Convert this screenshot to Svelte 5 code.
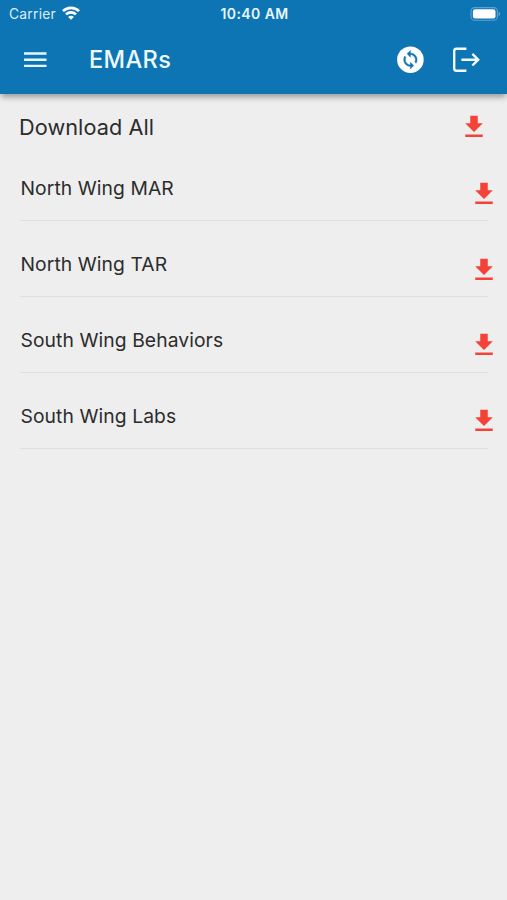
<script>
  const rows = ['North Wing MAR', 'North Wing TAR', 'South Wing Behaviors', 'South Wing Labs'];
</script>

{#snippet download()}
  <svg class="download" viewBox="0 0 24 24" aria-hidden="true">
    <path d="M5 20h14v-2H5v2zM19 9h-4V3H9v6H5l7 7 7-7z" />
  </svg>
{/snippet}

<div class="screen">
  <header>
    <div class="status">
      <div class="carrier">
        <span>Carrier</span>
        <svg width="18" height="14" viewBox="0 0 18 14" fill="none" stroke="#fff" stroke-width="2.6">
          <path d="M1 5.2C5.4.8 12.6.8 17 5.2" />
          <path d="M4 8.4c2.8-2.7 7.2-2.7 10 0" />
          <path d="M9 13.8 6.1 10.9c1.6-1.5 4.2-1.5 5.8 0z" fill="#fff" stroke="none" />
        </svg>
      </div>
      <span class="time">10:40 AM</span>
      <svg class="battery" width="31" height="14" viewBox="0 0 31 14">
        <rect x="1" y=".6" width="26.4" height="12.6" rx="3.8" fill="none" stroke="#5ea3d0" stroke-width="1.1" />
        <rect x="2.9" y="2.2" width="22.6" height="9.4" rx="2.3" fill="#fff" />
        <path d="M28.6 4.7c2 .7 2 3.7 0 4.4z" fill="#5ea3d0" />
      </svg>
    </div>
    <div class="toolbar">
      <svg class="menu" width="23" height="17" viewBox="0 0 23 17" fill="#e6f7ff">
        <path d="M0 .3h22.5v2.4H0zM0 6.5h22.5v2.4H0zM0 12.7h22.5v2.4H0z" />
      </svg>
      <h1>EMARs</h1>
      <svg class="sync" width="28" height="28" viewBox="0 0 28 28">
        <circle cx="14.4" cy="13.7" r="13.3" fill="#fff" />
        <path
          transform="translate(4.32 3.62) scale(.84)"
          fill="#0e75b4"
          stroke="#0e75b4"
          stroke-width=".5"
          d="M12 4V1L8 5l4 4V6c3.31 0 6 2.69 6 6 0 1.01-.25 1.97-.7 2.8l1.46 1.46A7.93 7.93 0 0 0 20 12c0-4.42-3.58-8-8-8zm0 14c-3.31 0-6-2.69-6-6 0-1.01.25-1.97.7-2.8L5.24 7.74A7.93 7.93 0 0 0 4 12c0 4.42 3.58 8 8 8v3l4-4-4-4v3z"
        />
      </svg>
      <svg class="logout" width="28" height="26" viewBox="0 0 28 26" fill="none" stroke="#f2fbff" stroke-width="2.4">
        <path d="M14.4 1.7H4.4Q2.2 1.7 2.2 3.9v17.6q0 2.2 2.2 2.2h10" />
        <path d="M9.4 12.7h17M20.4 6.9l5.8 5.8-5.8 5.8" />
      </svg>
    </div>
  </header>

  <main>
    <div class="all">
      <span>Download All</span>
      {@render download()}
    </div>
    <ul>
      {#each rows as name}
        <li>
          <span>{name}</span>
          {@render download()}
        </li>
      {/each}
    </ul>
  </main>
</div>

<style>
  .screen {
    height: 900px;
    background: #eee;
    font-family: Inter, 'Liberation Sans', sans-serif;
    color: #2c2c2c;
    overflow: hidden;
  }
  header {
    box-sizing: border-box;
    height: 94px;
    background: #0e75b4;
    color: #fff;
    box-shadow: 0 4px 6px -1px rgba(0, 0, 0, 0.36);
  }
  .status {
    display: grid;
    grid-template-columns: 1fr auto 1fr;
    align-items: center;
    height: 27px;
    padding: 0 6px 0 9px;
  }
  .carrier {
    display: flex;
    align-items: center;
    gap: 6px;
    font-size: 13.8px;
    letter-spacing: 0.25px;
    color: #dceefa;
  }
  .carrier svg {
    margin-top: -2px;
  }
  .time {
    font-size: 14px;
    font-weight: 600;
    letter-spacing: 0.42px;
    color: #e8f7ff;
    margin-right: 1px;
  }
  .battery {
    justify-self: end;
  }
  .toolbar {
    display: flex;
    align-items: center;
    height: 66px;
    padding: 0 27px 0 24px;
  }
  h1 {
    margin: 0 auto 0 42px;
    font-size: 23.6px;
    line-height: 28px;
    font-weight: 500;
    letter-spacing: 0.35px;
    color: #edf9ff;
  }
  .logout {
    margin-left: 28px;
  }
  .download {
    width: 30px;
    height: 30px;
    fill: #f44336;
    flex: none;
  }
  .all {
    display: flex;
    justify-content: space-between;
    align-items: center;
    box-sizing: border-box;
    height: 59px;
    padding: 6px 18px 0 19px;
    font-size: 21.7px;
    letter-spacing: 0.07px;
  }
  ul {
    list-style: none;
    margin: 0 19px 0 20px;
    padding: 0;
  }
  li {
    box-sizing: border-box;
    display: flex;
    justify-content: space-between;
    align-items: flex-start;
    height: 75.9px;
    padding-top: 31px;
    border-bottom: 1px solid #e0e0e0;
    font-size: 19.3px;
    line-height: 24px;
    letter-spacing: 0.08px;
  }
  li span {
    margin-left: 0.5px;
  }
  li:first-child {
    height: 68px;
    padding-top: 23px;
  }
  li .download {
    margin: 2.5px -11px 0 0;
  }
</style>
